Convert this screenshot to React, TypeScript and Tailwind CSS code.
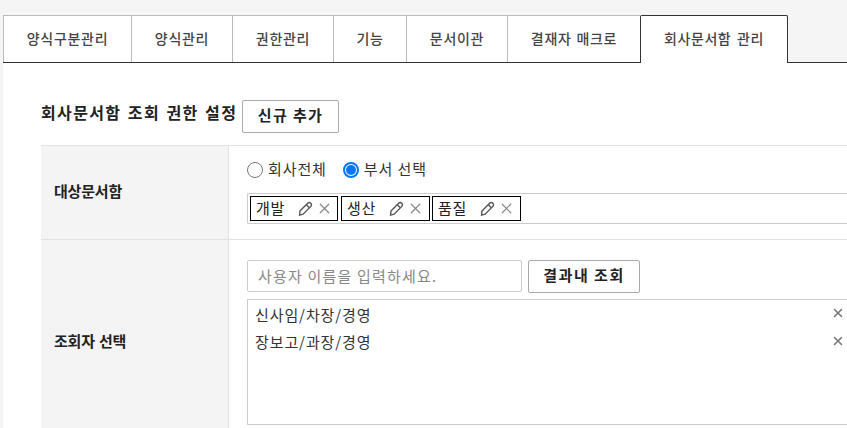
import { X } from "lucide-react";

const font = "font-['Noto_Sans_CJK_KR','Liberation_Sans',sans-serif]";

const tabs = [
  { label: "양식구분관리", width: "w-[128px]" },
  { label: "양식관리", width: "w-[101px]" },
  { label: "권한관리", width: "w-[101px]" },
  { label: "기능", width: "w-[73px]" },
  { label: "문서이관", width: "w-[101px]" },
  { label: "결재자 매크로", width: "w-[133px]" },
];

const depts = [
  { name: "개발", width: "w-[88px]", gap: "mr-[3px]" },
  { name: "생산", width: "w-[89px]", gap: "mr-[2px]" },
  { name: "품질", width: "w-[89px]", gap: "" },
];

function Pencil() {
  return (
    <svg width="17" height="17" viewBox="0 0 16 16" fill="none" stroke="#555" strokeWidth="1.3">
      <path d="M2.8 10.4 10 3a2.1 2.1 0 0 1 3 3l-7.2 7.4-3.4.8.4-3.8Z" />
      <path d="M8.8 4.4l2.8 2.8" />
    </svg>
  );
}

function DeptTag({ name, width, gap }: { name: string; width: string; gap: string }) {
  return (
    <div className={`flex h-[25px] items-center border border-black pl-[5px] ${width} ${gap}`}>
      <span className="pb-[3px] text-[15px] leading-none tracking-[0.7px] text-[#222]">{name}</span>
      <span className="ml-[12px] flex items-center">
        <Pencil />
      </span>
      <X className="ml-[2px] text-[#888]" size={17} strokeWidth={1.7} />
    </div>
  );
}

export default function App() {
  return (
    <div className={`h-[428px] w-[847px] overflow-hidden bg-[#f5f5f5] ${font}`}>
      <div className="pl-[3px] pt-[15px]">
        <div className="flex h-[48px] border-b border-[#333]">
          {tabs.map((tab) => (
            <div
              key={tab.label}
              className={`flex items-center justify-center border-t border-l border-[#bbb] bg-white pb-[2px] text-[14px] font-medium tracking-[0.7px] [word-spacing:1px] text-[#444] ${tab.width}`}
            >
              {tab.label}
            </div>
          ))}
          <div className="-mb-px flex h-[48px] w-[148px] items-center justify-center rounded-t-[2px] border border-b-0 border-[#333] bg-white pb-[2px] text-[14px] font-medium tracking-[0.6px] [word-spacing:2px] text-[#444]">
            회사문서함 관리
          </div>
        </div>

        <div className="h-[365px] bg-white pl-[38px] pt-[37px]">
          <div className="flex items-start">
            <h2 className="w-[199px] text-[16px] leading-[24px] font-bold tracking-[1.35px] [word-spacing:1.5px] whitespace-nowrap text-[#222]">
              회사문서함 조회 권한 설정
            </h2>
            <button className="ml-[2px] h-[33px] w-[97px] rounded-[2px] border border-[#aaa] bg-white pb-[2px] text-[15px] font-bold tracking-[1.4px] text-[#222]">
              신규 추가
            </button>
          </div>

          <div className="mt-[12px] border-t border-[#e2e2e2]">
            <div className="flex h-[94px] border-b border-[#e2e2e2]">
              <div className="flex w-[188px] items-center border-r border-[#e2e2e2] bg-[#f4f4f4] pb-[3px] pl-[13px] text-[15px] font-bold tracking-[-0.2px] text-[#222]">
                대상문서함
              </div>
              <div className="flex-1 pl-[18px] pt-[13px]">
                <div className="flex h-[21px] items-center text-[15px] tracking-[0.9px] text-[#333]">
                  <span className="h-[16px] w-[16px] rounded-full border border-[#777] bg-white" />
                  <span className="ml-[5px]">회사전체</span>
                  <span className="ml-[16px] flex h-[16px] w-[16px] items-center justify-center rounded-full border-2 border-[#0075ff] bg-white">
                    <span className="h-[10px] w-[10px] rounded-full bg-[#0075ff]" />
                  </span>
                  <span className="ml-[5px]">부서 선택</span>
                </div>
                <div className="mt-[13px] flex h-[31px] items-center rounded-l-[2px] border border-r-0 border-[#ccc] pl-[2px]">
                  {depts.map((d) => (
                    <DeptTag key={d.name} name={d.name} width={d.width} gap={d.gap} />
                  ))}
                </div>
              </div>
            </div>

            <div className="flex h-[202px]">
              <div className="flex w-[188px] items-center border-r border-[#e2e2e2] bg-[#f4f4f4] pl-[13px] text-[15px] font-bold tracking-[-0.2px] [word-spacing:1px] text-[#222]">
                조회자 선택
              </div>
              <div className="flex-1 pl-[18px] pt-[20px]">
                <div className="flex items-start">
                  <input
                    readOnly
                    placeholder="사용자 이름을 입력하세요."
                    className="h-[32px] w-[275px] rounded-[2px] border border-[#ccc] bg-white px-[10px] pb-[1px] text-[15px] tracking-[1.2px] placeholder:text-[#888]"
                  />
                  <button className="ml-[6px] h-[33px] w-[112px] rounded-[2px] border border-[#aaa] bg-white pb-[2px] text-[15px] font-bold tracking-[1.5px] text-[#222]">
                    결과내 조회
                  </button>
                </div>
                <div className="mt-[6px] h-[126px] border border-r-0 border-[#ccc] pl-[7px] pt-[1px] text-[15px] tracking-[0.9px] text-[#333]">
                  {["신사임/차장/경영", "장보고/과장/경영"].map((name) => (
                    <div key={name} className="flex h-[27.5px] items-center">
                      <span>{name}</span>
                      <X className="mb-[3px] ml-auto mr-[2px] text-[#777]" size={14} strokeWidth={2.6} />
                    </div>
                  ))}
                </div>
              </div>
            </div>
          </div>
        </div>
      </div>
    </div>
  );
}
